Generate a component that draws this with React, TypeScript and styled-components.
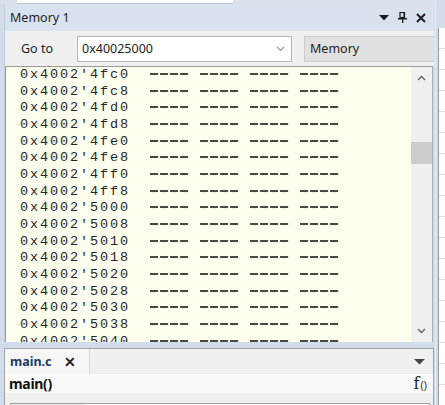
import React from "react";
import styled, { createGlobalStyle } from "styled-components";

const Global = createGlobalStyle`
  html, body { margin: 0; padding: 0; background: #d3dcea; }
  body { font-family: "Noto Sans", "Open Sans", Arial, sans-serif; overflow: hidden; }
`;

const Page = styled.div`
  width: 445px;
  height: 405px;
  display: flex;
  background: #d3dcea;
  overflow: hidden;
`;

const Main = styled.div`
  width: 435px;
  display: flex;
  flex-direction: column;
`;

const TopStrip = styled.div`
  height: 4px;
  padding-left: 17px;
  display: flex;
  background: #d9e1ec;
`;

const TopStub = styled.div`
  width: 216px;
  height: 3px;
  background: #ffffff;
  border-bottom: 1px solid #bcc5d2;
`;

const Panel = styled.div`
  margin-left: 4px;
  width: 430px;
  display: flex;
  flex-direction: column;
  border-left: 1px solid #c3ccd9;
  box-sizing: border-box;
`;

const TitleBar = styled.div`
  height: 27px;
  background: #d9e3f0;
  display: flex;
  align-items: center;
  padding: 0 8px 0 5px;
  font-size: 12.5px;
  color: #1e1e1e;
`;

const Title = styled.span`
  flex: 1;
`;

const TitleIcons = styled.div`
  display: flex;
  align-items: center;
  gap: 9px;
`;

const Toolbar = styled.div`
  height: 35px;
  background: #f0f0f0;
  display: flex;
  align-items: center;
  padding-left: 16px;
  font-size: 12.5px;
  color: #1e1e1e;
`;

const Label = styled.span`
  width: 56px;
`;

const AddressBox = styled.div`
  width: 215px;
  height: 26px;
  box-sizing: border-box;
  background: #ffffff;
  border: 1px solid #b6b6b6;
  display: flex;
  align-items: center;
  padding: 0 6px 0 4px;
  margin-right: 12px;
`;

const AddressText = styled.span`
  flex: 1;
`;

const ModeBox = styled.div`
  flex: 1;
  height: 26px;
  box-sizing: border-box;
  background: #e1e1e1;
  border: 1px solid #cccccc;
  border-right: none;
  display: flex;
  align-items: center;
  padding-left: 5px;
`;

const MemoryView = styled.div`
  height: 276px;
  display: flex;
  background: #fffff0;
  border-top: 1px solid #9a9a9a;
  border-left: 1px solid #9a9a9a;
  border-right: 1px solid #b0b0b0;
  box-sizing: border-box;
  margin-right: 1px;
`;

const Rows = styled.div`
  flex: 1;
  padding-left: 14px;
  overflow: hidden;
`;

const Row = styled.div`
  display: flex;
  align-items: center;
  height: 16.67px;
  font-family: "Liberation Mono", "DejaVu Sans Mono", monospace;
  font-size: 13.5px;
  line-height: 16.67px;
  color: #262626;
  white-space: pre;
`;

const Address = styled.span`
  width: 130px;
  letter-spacing: 1.9px;
`;

const DashGroup = styled.span`
  display: inline-flex;
  gap: 1.9px;
  margin-right: 11.9px;
`;

const Dash = styled.span`
  color: #4a4a42;
  text-decoration: line-through;
  text-decoration-thickness: 2px;
  text-decoration-color: #4a4a42;
`;

const Scrollbar = styled.div`
  width: 21px;
  background: #f0f0f0;
  display: flex;
  flex-direction: column;
  align-items: stretch;
`;

const ArrowCell = styled.div`
  height: 22px;
  display: flex;
  align-items: center;
  justify-content: center;
`;

const Track = styled.div`
  flex: 1;
  padding-top: 53px;
`;

const Thumb = styled.div`
  height: 22px;
  background: #cdcdcd;
`;

const Spacer = styled.div`
  height: 6px;
`;

const BottomPanel = styled.div`
  margin-left: 4px;
  width: 430px;
  flex: 1;
  box-sizing: border-box;
  border: 1px solid #a3a3a3;
  border-bottom: none;
  background: #f0f0f0;
  display: flex;
  flex-direction: column;
`;

const TabStrip = styled.div`
  height: 25px;
  display: flex;
  align-items: stretch;
  padding-right: 8px;
`;

const Tab = styled.div`
  width: 85px;
  box-sizing: border-box;
  background: #f7f7f7;
  border-right: 1px solid #d6d6d6;
  display: flex;
  align-items: center;
  padding-left: 5px;
  gap: 12px;
`;

const TabName = styled.span`
  font-size: 12.5px;
  font-weight: 700;
  color: #1d3a63;
`;

const TabClose = styled.span`
  font-size: 14px;
  font-weight: 700;
  color: #222;
  line-height: 1;
`;

const TabFill = styled.div`
  flex: 1;
  display: flex;
  align-items: center;
  justify-content: flex-end;
`;

const FuncRow = styled.div`
  height: 19px;
  background: #fafafa;
  display: flex;
  align-items: center;
  padding: 0 6px 0 4px;
`;

const FuncName = styled.span`
  flex: 1;
  font-size: 14px;
  font-weight: 700;
  color: #111;
  letter-spacing: -0.3px;
`;

const FuncIcon = styled.span`
  font-family: "DejaVu Serif", "Liberation Serif", serif;
  font-size: 16px;
  color: #222;
  display: flex;
  align-items: baseline;
`;

const FuncParens = styled.span`
  font-family: "Liberation Sans", Arial, sans-serif;
  font-size: 10px;
  margin-left: 1px;
`;

const BottomBox = styled.div`
  margin: 10px 3px 0 5px;
  flex: 1;
  border: 1px solid #a0a0a0;
  border-bottom: none;
  background: #ffffff;
  display: flex;
`;

const BoxSegment = styled.div`
  width: 72px;
  background: #ececec;
`;

const RightStrip = styled.div`
  width: 10px;
  box-sizing: border-box;
  padding-left: 2px;
  display: flex;
  flex-direction: column;
  background: #d3dcea;
  border-left: 1px solid #e6ecf5;
`;

const SidePane = styled.div`
  margin-top: 28px;
  flex: 1;
  border-left: 1px solid #9a9a9a;
  background: repeating-linear-gradient(
    to bottom,
    #ffffff 0px,
    #ffffff 20px,
    #dcdcdc 20px,
    #dcdcdc 21px
  );
`;

const Chevron = ({ up, color = "#606060" }: { up?: boolean; color?: string }) => (
  <svg width="9" height="6" viewBox="0 0 9 6">
    <polyline
      points={up ? "1,5 4.5,1.5 8,5" : "1,1 4.5,4.5 8,1"}
      fill="none"
      stroke={color}
      strokeWidth="1.4"
    />
  </svg>
);

const DownTriangle = () => (
  <svg width="10" height="6" viewBox="0 0 10 6">
    <polygon points="0,0 10,0 5,5.5" fill="#1e1e1e" />
  </svg>
);

const PinIcon = () => (
  <svg width="9" height="11" viewBox="0 0 9 11">
    <rect x="2" y="0.5" width="4.5" height="5" fill="none" stroke="#1e1e1e" strokeWidth="1.2" />
    <rect x="5.5" y="0.5" width="1.5" height="5.5" fill="#1e1e1e" />
    <rect x="0" y="6" width="9" height="1.5" fill="#1e1e1e" />
    <rect x="4" y="7" width="1.3" height="4" fill="#1e1e1e" />
  </svg>
);

const CloseIcon = () => (
  <svg width="10" height="10" viewBox="0 0 10 10">
    <path d="M1,1 L9,9 M9,1 L1,9" stroke="#1e1e1e" strokeWidth="2" />
  </svg>
);

const addresses: string[] = [];
for (let a = 0x40024fc0; a <= 0x40025040; a += 8) {
  const hex = a.toString(16).padStart(8, "0");
  addresses.push(`0x${hex.slice(0, 4)}'${hex.slice(4)}`);
}

const Dashes = () => (
  <DashGroup>
    <Dash>-</Dash>
    <Dash>-</Dash>
    <Dash>-</Dash>
    <Dash>-</Dash>
  </DashGroup>
);

export default function App() {
  return (
    <>
      <Global />
      <Page>
        <Main>
          <TopStrip>
            <TopStub />
          </TopStrip>
          <Panel>
            <TitleBar>
              <Title>Memory 1</Title>
              <TitleIcons>
                <DownTriangle />
                <PinIcon />
                <CloseIcon />
              </TitleIcons>
            </TitleBar>
            <Toolbar>
              <Label>Go to</Label>
              <AddressBox>
                <AddressText>0x40025000</AddressText>
                <Chevron color="#a0a0a0" />
              </AddressBox>
              <ModeBox>Memory</ModeBox>
            </Toolbar>
            <MemoryView>
              <Rows>
                {addresses.map((addr) => (
                  <Row key={addr}>
                    <Address>{addr}</Address>
                    <Dashes />
                    <Dashes />
                    <Dashes />
                    <Dashes />
                  </Row>
                ))}
              </Rows>
              <Scrollbar>
                <ArrowCell>
                  <Chevron up />
                </ArrowCell>
                <Track>
                  <Thumb />
                </Track>
                <ArrowCell>
                  <Chevron />
                </ArrowCell>
              </Scrollbar>
            </MemoryView>
          </Panel>
          <Spacer />
          <BottomPanel>
            <TabStrip>
              <Tab>
                <TabName>main.c</TabName>
                <TabClose>✕</TabClose>
              </Tab>
              <TabFill>
                <svg width="11" height="6" viewBox="0 0 11 6">
                  <polygon points="0,0 11,0 5.5,5.5" fill="#444" />
                </svg>
              </TabFill>
            </TabStrip>
            <FuncRow>
              <FuncName>main()</FuncName>
              <FuncIcon>
                f<FuncParens>()</FuncParens>
              </FuncIcon>
            </FuncRow>
            <BottomBox>
              <BoxSegment />
            </BottomBox>
          </BottomPanel>
        </Main>
        <RightStrip>
          <SidePane />
        </RightStrip>
      </Page>
    </>
  );
}
